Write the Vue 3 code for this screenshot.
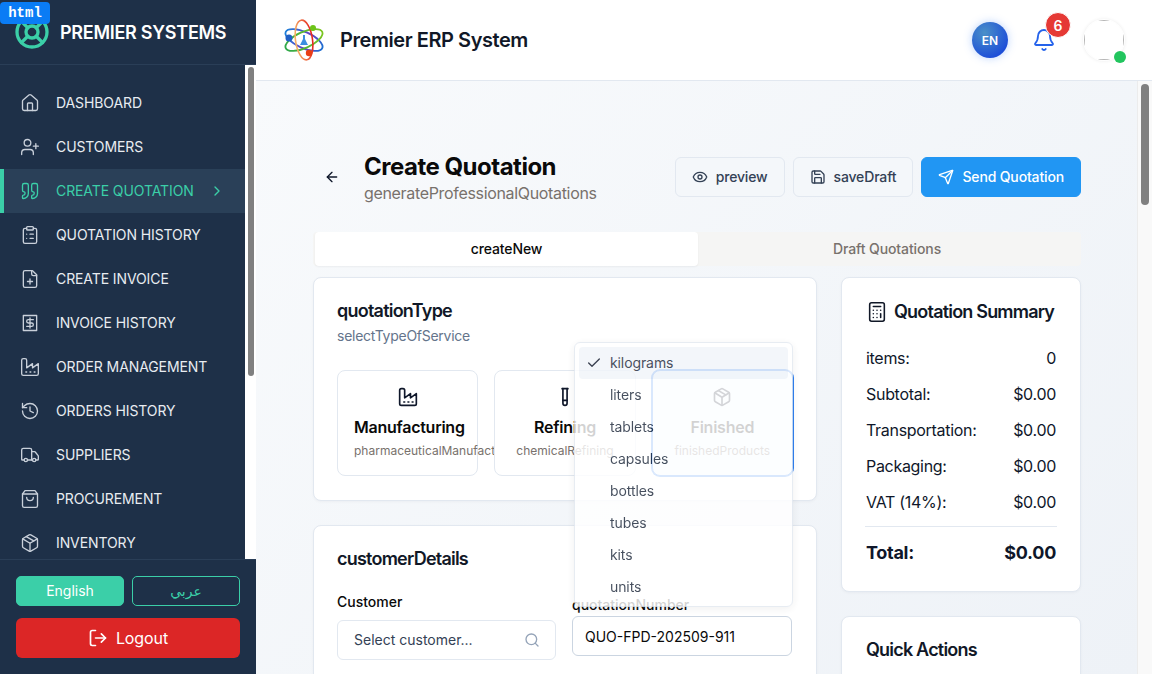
<script setup>
import { h } from 'vue'

const circle = (cx, cy, r) => `M${cx - r} ${cy}a${r} ${r} 0 1 0 ${r * 2} 0a${r} ${r} 0 1 0 ${-r * 2} 0`

const icons = {
  house: ['M15 21v-8a1 1 0 0 0-1-1h-4a1 1 0 0 0-1 1v8', 'M3 10a2 2 0 0 1 .709-1.528l7-5.999a2 2 0 0 1 2.582 0l7 5.999A2 2 0 0 1 21 10v9a2 2 0 0 1-2 2H5a2 2 0 0 1-2-2z'],
  userPlus: ['M16 21v-2a4 4 0 0 0-4-4H6a4 4 0 0 0-4 4v2', circle(9, 7, 4), 'M19 8v6', 'M22 11h-6'],
  quote: ['M16 3a2 2 0 0 0-2 2v6a2 2 0 0 0 2 2 1 1 0 0 1 1 1v1a2 2 0 0 1-2 2 1 1 0 0 0-1 1v2a1 1 0 0 0 1 1 6 6 0 0 0 6-6V5a2 2 0 0 0-2-2z', 'M5 3a2 2 0 0 0-2 2v6a2 2 0 0 0 2 2 1 1 0 0 1 1 1v1a2 2 0 0 1-2 2 1 1 0 0 0-1 1v2a1 1 0 0 0 1 1 6 6 0 0 0 6-6V5a2 2 0 0 0-2-2z'],
  clipboard: ['M9 2h6a1 1 0 0 1 1 1v2a1 1 0 0 1-1 1H9a1 1 0 0 1-1-1V3a1 1 0 0 1 1-1z', 'M16 4h2a2 2 0 0 1 2 2v14a2 2 0 0 1-2 2H6a2 2 0 0 1-2-2V6a2 2 0 0 1 2-2h2', 'M12 11h4', 'M12 16h4', 'M8 11h.01', 'M8 16h.01'],
  filePlus: ['M15 2H6a2 2 0 0 0-2 2v16a2 2 0 0 0 2 2h12a2 2 0 0 0 2-2V7Z', 'M14 2v4a2 2 0 0 0 2 2h4', 'M9 15h6', 'M12 18v-6'],
  receipt: ['M4 3h16v18H4z', 'M16 8h-6a2 2 0 1 0 0 4h4a2 2 0 1 1 0 4H8', 'M12 18V6'],
  factory: ['M2 20a2 2 0 0 0 2 2h16a2 2 0 0 0 2-2V8l-7 5V8l-7 5V4a2 2 0 0 0-2-2H4a2 2 0 0 0-2 2Z', 'M17 18h1', 'M12 18h1', 'M7 18h1'],
  history: ['M3 12a9 9 0 1 0 9-9 9.75 9.75 0 0 0-6.74 2.74L3 8', 'M3 3v5h5', 'M12 7v5l4 2'],
  truck: ['M14 18V6a2 2 0 0 0-2-2H4a2 2 0 0 0-2 2v11a1 1 0 0 0 1 1h2', 'M15 18H9', 'M19 18h2a1 1 0 0 0 1-1v-3.65a1 1 0 0 0-.22-.624l-3.48-4.35A1 1 0 0 0 17.52 8H14', circle(17, 18, 2), circle(7, 18, 2)],
  bag: ['M6 2 3 6v14a2 2 0 0 0 2 2h14a2 2 0 0 0 2-2V6l-3-4Z', 'M3 6h18', 'M16 10a4 4 0 0 1-8 0'],
  box: ['M11 21.73a2 2 0 0 0 2 0l7-4A2 2 0 0 0 21 16V8a2 2 0 0 0-1-1.73l-7-4a2 2 0 0 0-2 0l-7 4A2 2 0 0 0 3 8v8a2 2 0 0 0 1 1.73z', 'M12 22V12', 'm3.3 7 7.703 4.734a2 2 0 0 0 1.994 0L20.7 7', 'm7.5 4.27 9 5.15'],
  chevron: ['m9 18 6-6-6-6'],
  logout: ['M9 21H5a2 2 0 0 1-2-2V5a2 2 0 0 1 2-2h4', 'm16 17 5-5-5-5', 'M21 12H9'],
  arrowLeft: ['m12 19-7-7 7-7', 'M19 12H5'],
  eye: ['M2.062 12.348a1 1 0 0 1 0-.696 10.75 10.75 0 0 1 19.876 0 1 1 0 0 1 0 .696 10.75 10.75 0 0 1-19.876 0', circle(12, 12, 3)],
  save: ['M15.2 3a2 2 0 0 1 1.4.6l3.8 3.8a2 2 0 0 1 .6 1.4V19a2 2 0 0 1-2 2H5a2 2 0 0 1-2-2V5a2 2 0 0 1 2-2z', 'M17 21v-7a1 1 0 0 0-1-1H8a1 1 0 0 0-1 1v7', 'M7 3v4a1 1 0 0 0 1 1h7'],
  send: ['M14.536 21.686a.5.5 0 0 0 .937-.024l6.5-19a.496.496 0 0 0-.635-.635l-19 6.5a.5.5 0 0 0-.024.937l7.93 3.18a2 2 0 0 1 1.112 1.11z', 'm21.854 2.147-10.94 10.939'],
  bell: ['M10.268 21a2 2 0 0 0 3.464 0', 'M3.262 15.326A1 1 0 0 0 4 17h16a1 1 0 0 0 .74-1.673C19.41 13.956 18 12.499 18 8A6 6 0 0 0 6 8c0 4.499-1.411 5.956-2.738 7.326'],
  tube: ['M14.5 2v17.5c0 1.4-1.1 2.5-2.5 2.5c-1.4 0-2.5-1.1-2.5-2.5V2', 'M8.5 2h7', 'M14.5 16h-5'],
  calculator: ['M6 2h12a2 2 0 0 1 2 2v16a2 2 0 0 1-2 2H6a2 2 0 0 1-2-2V4a2 2 0 0 1 2-2z', 'M8 6h8', 'M16 14v4', 'M16 10h.01', 'M12 10h.01', 'M8 10h.01', 'M12 14h.01', 'M8 14h.01', 'M12 18h.01', 'M8 18h.01'],
  check: ['M20 6 9 17l-5-5'],
  search: [circle(11, 11, 8), 'm21 21-4.3-4.3'],
  buoy: [circle(12, 12, 10), circle(12, 12, 4), 'm4.93 4.93 4.24 4.24', 'm14.83 9.17 4.24-4.24', 'm14.83 14.83 4.24 4.24', 'm9.17 14.83-4.24 4.24']
}

const Icon = (props) => h('svg', {
  width: props.size || 20,
  height: props.size || 20,
  viewBox: '0 0 24 24',
  fill: 'none',
  stroke: 'currentColor',
  'stroke-width': props.weight || 2,
  'stroke-linecap': 'round',
  'stroke-linejoin': 'round'
}, icons[props.name].map((d) => h('path', { d })))
Icon.props = ['name', 'size', 'weight']

const navItems = [
  { label: 'Dashboard', icon: 'house' },
  { label: 'Customers', icon: 'userPlus' },
  { label: 'Create Quotation', icon: 'quote', active: true },
  { label: 'Quotation History', icon: 'clipboard' },
  { label: 'Create Invoice', icon: 'filePlus' },
  { label: 'Invoice History', icon: 'receipt' },
  { label: 'Order Management', icon: 'factory' },
  { label: 'Orders History', icon: 'history' },
  { label: 'Suppliers', icon: 'truck' },
  { label: 'Procurement', icon: 'bag' },
  { label: 'Inventory', icon: 'box' }
]

const serviceTypes = [
  { title: 'Manufacturing', sub: 'pharmaceuticalManufacturing', icon: 'factory' },
  { title: 'Refining', sub: 'chemicalRefining', icon: 'tube' },
  { title: 'Finished', sub: 'finishedProducts', icon: 'box', selected: true }
]

const units = ['kilograms', 'liters', 'tablets', 'capsules', 'bottles', 'tubes', 'kits', 'units']

const summary = [
  { label: 'items:', value: '0' },
  { label: 'Subtotal:', value: '$0.00' },
  { label: 'Transportation:', value: '$0.00' },
  { label: 'Packaging:', value: '$0.00' },
  { label: 'VAT (14%):', value: '$0.00' }
]
</script>

<template>
  <div class="app">
    <span class="html-tag">html</span>

    <aside class="sidebar">
      <div class="brand">
        <Icon name="buoy" :size="36" :weight="2.2" class="brand-icon" />
        <span>PREMIER SYSTEMS</span>
      </div>

      <div class="nav-wrap">
        <nav class="nav">
          <a v-for="item in navItems" :key="item.label" class="nav-item" :class="{ active: item.active }">
            <Icon :name="item.icon" :size="20" :weight="1.6" class="nav-icon" />
            <span>{{ item.label }}</span>
            <Icon v-if="item.active" name="chevron" :size="16" class="nav-chevron" />
          </a>
        </nav>
        <div class="rail"><div class="rail-thumb"></div></div>
      </div>

      <div class="side-foot">
        <div class="lang-row">
          <button class="lang lang-on">English</button>
          <button class="lang">عربي</button>
        </div>
        <button class="logout">
          <Icon name="logout" :size="20" />
          Logout
        </button>
      </div>
    </aside>

    <div class="main">
      <header class="topbar">
        <svg class="atom" width="42" height="42" viewBox="0 0 42 42" fill="none">
          <defs>
            <linearGradient id="ringRed" x1="0" y1="0" x2="1" y2="0">
              <stop offset="0" stop-color="#f7b267" />
              <stop offset="1" stop-color="#e5261f" />
            </linearGradient>
            <linearGradient id="ringBlue" x1="0" y1="0" x2="1" y2="0">
              <stop offset="0" stop-color="#1d7ed8" />
              <stop offset=".6" stop-color="#6a3fc4" />
              <stop offset="1" stop-color="#1d6fd1" />
            </linearGradient>
            <linearGradient id="ringGreen" x1="0" y1="0" x2="1" y2="0">
              <stop offset="0" stop-color="#2fa84a" />
              <stop offset="1" stop-color="#7cc520" />
            </linearGradient>
          </defs>
          <ellipse cx="21" cy="21" rx="20" ry="8" transform="rotate(24 21 21)" stroke="url(#ringBlue)" stroke-width="1.8" />
          <ellipse cx="21" cy="21" rx="20" ry="8" transform="rotate(-24 21 21)" stroke="url(#ringGreen)" stroke-width="1.8" />
          <ellipse cx="21" cy="21" rx="8.500" ry="20" transform="rotate(-8 21 21)" stroke="url(#ringRed)" stroke-width="1.600" />
          <path d="M20 16h2v4l3 6h-8l3-6z" fill="#3b8ee0" />
          <circle cx="6" cy="19" r="3.500" fill="#1f5fc4" />
          <circle cx="30" cy="9" r="3" fill="#6cc419" />
          <circle cx="26" cy="34" r="3.200" fill="#ea3d14" />
        </svg>
        <h1 class="app-title">Premier ERP System</h1>
        <div class="top-actions">
          <div class="globe">EN</div>
          <div class="bell">
            <Icon name="bell" :size="24" :weight="1.8" />
            <span class="bell-count">6</span>
          </div>
          <div class="avatar">
            <div class="avatar-clip"><div class="avatar-img"></div></div>
            <span class="avatar-dot"></span>
          </div>
        </div>
      </header>

      <div class="body">
        <main class="content">
          <div class="page">
            <div class="page-head">
              <button class="back"><Icon name="arrowLeft" :size="16" /></button>
              <div class="page-title">
                <h2>Create Quotation</h2>
                <p>generateProfessionalQuotations</p>
              </div>
              <div class="page-actions">
                <button class="btn"><Icon name="eye" :size="16" />preview</button>
                <button class="btn"><Icon name="save" :size="16" />saveDraft</button>
                <button class="btn btn-primary"><Icon name="send" :size="16" />Send Quotation</button>
              </div>
            </div>

            <div class="tabs">
              <div class="tab tab-on">createNew</div>
              <div class="tab tab-off">Draft Quotations</div>
            </div>

            <div class="columns">
              <div class="col">
                <section class="card card-type">
                  <h3>quotationType</h3>
                  <p class="card-sub">selectTypeOfService</p>
                  <div class="types">
                    <div v-for="t in serviceTypes" :key="t.title" class="type" :class="{ selected: t.selected }">
                      <Icon :name="t.icon" :size="20" :weight="2" class="type-icon" />
                      <div class="type-title">{{ t.title }}</div>
                      <div class="type-sub">{{ t.sub }}</div>
                    </div>
                  </div>
                </section>

                <section class="card">
                  <h3>customerDetails</h3>
                  <div class="fields">
                    <div>
                      <label class="lbl">Customer</label>
                      <div class="input input-search">
                        <span>Select customer...</span>
                        <Icon name="search" :size="16" class="search-icon" />
                      </div>
                    </div>
                    <div class="field-number">
                      <label class="lbl">quotationNumber</label>
                      <div class="input input-number">QUO-FPD-202509-911</div>
                    </div>
                  </div>
                </section>
              </div>

              <div class="col">
                <section class="card card-summary">
                  <h3 class="summary-title"><Icon name="calculator" :size="22" :weight="1.7" />Quotation Summary</h3>
                  <div v-for="row in summary" :key="row.label" class="sum-row">
                    <span>{{ row.label }}</span><span>{{ row.value }}</span>
                  </div>
                  <div class="sum-total">
                    <span>Total:</span><span>$0.00</span>
                  </div>
                </section>

                <section class="card card-quick">
                  <h3>Quick Actions</h3>
                </section>
              </div>
            </div>
          </div>

          <ul class="dropdown">
            <li v-for="(u, i) in units" :key="u" class="dd-item" :class="{ current: i === 0 }">
              <Icon v-if="i === 0" name="check" :size="16" class="dd-check" />
              {{ u }}
            </li>
          </ul>
        </main>
        <div class="rail rail-main"><div class="rail-thumb"></div></div>
      </div>
    </div>
  </div>
</template>

<style>
html, body { margin: 0; height: 100%; overflow: hidden; }
</style>

<style scoped>
* { box-sizing: border-box; }

.app {
  display: flex;
  height: 674px;
  overflow: hidden;
  position: relative;
  font-family: Inter, "DejaVu Sans", sans-serif;
  color: #0f172a;
}

.html-tag {
  position: absolute;
  left: 0;
  top: 2px;
  z-index: 5;
  width: 50px;
  height: 22px;
  background: #0a7cf5;
  border-radius: 4px;
  color: #fff;
  font: bold 14px/22px "Liberation Mono", monospace;
  text-align: center;
}

/* sidebar */
.sidebar {
  width: 256px;
  flex: none;
  display: flex;
  flex-direction: column;
  background: #1e3048;
  color: #e5e9ef;
}
.brand {
  height: 65px;
  flex: none;
  display: flex;
  align-items: center;
  gap: 10px;
  padding-left: 14px;
  border-bottom: 1px solid #2a3e57;
  color: #fff;
  font-size: 18px;
  font-weight: 600;
  letter-spacing: -.27px;
}
.brand-icon { color: #3bcfa8; }

.nav-wrap { flex: 1; min-height: 0; display: flex; }
.nav { flex: 1; min-width: 0; padding-top: 16px; overflow: hidden; }
.nav-item {
  height: 44px;
  display: flex;
  align-items: center;
  gap: 16px;
  padding-left: 20px;
  padding-bottom: 1px;
  font-size: 14px;
  font-weight: 400;
  letter-spacing: -.1px;
  text-transform: uppercase;
  color: #e8ecf1;
}
.nav-icon { color: #c9d0da; flex: none; margin-top: 1px; }
.nav-item.active {
  background: #2a4058;
  border-left: 4px solid #3bcfa8;
  padding-left: 16px;
  color: #3bcfa8;
}
.nav-item.active .nav-icon { color: #3bcfa8; }
.nav-chevron { margin-left: -1px; margin-top: 1px; }

.rail {
  width: 11px;
  flex: none;
  background: #fff;
  padding: 2px 2px 0 3px;
}
.rail-thumb {
  height: 309px;
  border-radius: 4px;
  background: #808080;
}
.rail-main {
  width: 15px;
  background: #f9f9f9;
  border-left: 1px solid #ececec;
  padding: 3px 3px 0 3px;
}
.rail-main .rail-thumb { height: 121px; }

.side-foot {
  height: 115px;
  flex: none;
  padding: 16px;
  border-top: 1px solid #2a3e57;
}
.lang-row { display: flex; gap: 8px; margin-bottom: 12px; }
.lang {
  flex: 1;
  height: 30px;
  padding: 0 0 1px;
  border: 1px solid #3bcfa8;
  border-radius: 5px;
  background: transparent;
  color: #3bcfa8;
  font: 14px Inter, "DejaVu Sans", sans-serif;
}
.lang-on { background: #3bcfa8; color: #fff; }
.logout {
  width: 100%;
  height: 40px;
  display: flex;
  align-items: center;
  justify-content: center;
  gap: 8px;
  border: 0;
  border-radius: 6px;
  background: #dc2626;
  color: #fff;
  font: 16px Inter, sans-serif;
  letter-spacing: -.1px;
}

/* top bar */
.main { flex: 1; min-width: 0; display: flex; flex-direction: column; }
.topbar {
  height: 81px;
  flex: none;
  display: flex;
  align-items: center;
  padding: 0 28px 0 27px;
  background: #fff;
  border-bottom: 1px solid #e2e8f0;
}
.atom { flex: none; }
.app-title { margin: 0 0 0 15px; font-size: 20px; font-weight: 600; letter-spacing: -.44px; color: #111827; }
.top-actions { margin-left: auto; display: flex; align-items: center; }
.globe {
  width: 36px;
  height: 36px;
  display: flex;
  align-items: center;
  justify-content: center;
  border-radius: 50%;
  background: radial-gradient(circle at 35% 30%, #4a90c8, #1d4ed8 75%);
  box-shadow: 0 0 8px rgba(59, 130, 246, .35);
  color: #fff;
  font-size: 12px;
  font-weight: 600;
}
.bell { position: relative; margin-left: 24px; width: 24px; height: 24px; color: #2563eb; }
.bell-count {
  position: absolute;
  left: 13px;
  top: -16px;
  width: 26px;
  height: 26px;
  display: flex;
  align-items: center;
  justify-content: center;
  border: 1px solid #fff;
  border-radius: 50%;
  background: #e53935;
  color: #fff;
  font-size: 14px;
  font-weight: 600;
}
.avatar {
  position: relative;
  margin-left: 28px;
  width: 40px;
  height: 40px;
  border-radius: 50%;
  box-shadow: 0 0 0 1px #fff, 0 0 4px rgba(0, 0, 0, .12);
}
.avatar-clip { width: 40px; height: 40px; border-radius: 50%; overflow: hidden; background: #fff; }
.avatar-img { width: 40px; height: 40px; border: 1px solid #b5b5b5; }
.avatar-dot {
  position: absolute;
  right: -2px;
  bottom: -3px;
  width: 12px;
  height: 12px;
  border-radius: 50%;
  background: #22c55e;
}

/* page */
.body { flex: 1; min-height: 0; display: flex; }
.content {
  flex: 1;
  min-width: 0;
  position: relative;
  overflow: hidden;
  padding-top: 76px;
  background: linear-gradient(135deg, #f8fafc, #eef2f7);
}
.page { width: 768px; margin-left: 57px; }
.page-head { display: flex; align-items: center; height: 40px; }
.back {
  width: 16px;
  height: 16px;
  padding: 0;
  margin-left: 11px;
  display: flex;
  border: 0;
  background: none;
  color: #0f172a;
}
.page-title { margin-left: 24px; white-space: nowrap; }
.page-title h2 { margin: 0; font-size: 24px; line-height: 32px; font-weight: 700; letter-spacing: -.5px; color: #0a0a0a; }
.page-title p { margin: 0; font-size: 16px; line-height: 20px; letter-spacing: -.33px; color: #78716c; }
.page-actions { margin-left: auto; display: flex; gap: 8px; }
.btn {
  height: 40px;
  display: flex;
  align-items: center;
  gap: 8px;
  padding: 0 16px 1px;
  border: 1px solid #e2e8f0;
  border-radius: 6px;
  background: #f4f7fa;
  color: #334155;
  font: 500 14px Inter, sans-serif;
  letter-spacing: -.15px;
}
.btn svg { margin-top: 1px; }
.btn-primary { border-color: #2196f3; background: #2196f3; color: #fff; }

.tabs {
  margin-top: 35px;
  height: 34px;
  display: flex;
  padding: 0 2px;
  border-radius: 4px;
  background: #f5f5f4;
}
.tab {
  flex: 1;
  display: flex;
  align-items: center;
  justify-content: center;
  padding-bottom: 1px;
  font-size: 14px;
  font-weight: 500;
  letter-spacing: -.1px;
  color: #78716c;
}
.tab-on { flex: 0 0 383px; background: #fff; border-radius: 4px; color: #0a0a0a; box-shadow: 0 1px 2px rgba(0, 0, 0, .05); }
.tab-off { padding-right: 3px; }

.columns { margin-top: 11px; display: grid; grid-template-columns: 504px 240px; gap: 24px; }
.col { display: flex; flex-direction: column; gap: 24px; min-width: 0; }
.card {
  padding: 23px;
  background: #fff;
  border: 1px solid #e2e8f0;
  border-radius: 8px;
  box-shadow: 0 1px 3px rgba(15, 23, 42, .04);
}
.card h3 { margin: 0; font-size: 18px; line-height: 20px; font-weight: 600; letter-spacing: -.77px; color: #111827; }
.card-type { padding-bottom: 24px; }
.card-sub { margin: 5px 0 0; font-size: 14px; line-height: 20px; letter-spacing: -.26px; color: #64748b; }

.types { margin-top: 24px; display: grid; grid-template-columns: repeat(3, minmax(0, 1fr)); gap: 16px; }
.type {
  position: relative;
  z-index: 0;
  height: 106px;
  padding: 16px;
  background: #fff;
  border: 1px solid #e2e8f0;
  border-radius: 8px;
  text-align: center;
  white-space: nowrap;
}
.type.selected { border-color: #2f80f0; box-shadow: 0 0 0 1px #2f80f0; background: #eff6ff; }
.type-icon { display: block; margin: 0 auto; }
.type-title { margin-top: 8px; font-size: 16px; line-height: 24px; font-weight: 600; letter-spacing: -.25px; color: #0a0a0a; }
.type-sub { margin-top: 4px; font-size: 12px; line-height: 16px; color: #78716c; }

.fields { margin-top: 23px; display: grid; grid-template-columns: 219px 220px; gap: 16px; }
.lbl { display: block; font-size: 14px; line-height: 20px; font-weight: 500; color: #0a0a0a; }
.input {
  height: 40px;
  display: flex;
  align-items: center;
  border: 1px solid #e2e8f0;
  border-radius: 6px;
  background: #fff;
  font-size: 14px;
}
.input-search { margin-top: 8px; justify-content: space-between; padding: 0 15px 1px 16px; color: #334155; }
.search-icon { color: #94a3b8; }
.field-number { padding-top: 3px; }
.input-number { margin-top: 1px; padding-left: 12px; border-color: #cbd5e1; color: #0a0a0a; }

.card-summary { padding-top: 23px; padding-bottom: 0; }
.card .summary-title { display: flex; align-items: center; gap: 6px; margin-bottom: 17px; padding-left: 1px; white-space: nowrap; letter-spacing: -.8px; }
.sum-row {
  height: 36px;
  display: flex;
  align-items: center;
  justify-content: space-between;
  padding: 0 1px;
  font-size: 16px;
  letter-spacing: -.3px;
  color: #0f172a;
}
.sum-total {
  margin-top: 6px;
  padding: 16px 1px 28px;
  display: flex;
  justify-content: space-between;
  border-top: 1px solid #e2e8f0;
  font-size: 18px;
  line-height: 20px;
  font-weight: 700;
  letter-spacing: -.3px;
}
.card-quick { padding-top: 23px; padding-left: 24px; height: 120px; }
.card-quick h3 { letter-spacing: -.8px; }

.dropdown {
  position: absolute;
  left: 318px;
  top: 261px;
  width: 219px;
  height: 265px;
  margin: 0;
  padding: 4px;
  list-style: none;
  background: #fff;
  border: 1px solid #e2e8f0;
  border-radius: 6px;
  box-shadow: 0 2px 10px rgba(0, 0, 0, .08);
  opacity: .82;
}
.dd-item {
  position: relative;
  height: 32px;
  display: flex;
  align-items: center;
  padding-left: 31px;
  padding-bottom: 1px;
  border-radius: 4px;
  font-size: 14px;
  letter-spacing: -.1px;
  color: #1e293b;
}
.dd-item.current { background: #f1f5f9; }
.dd-check { position: absolute; left: 7px; top: 8px; color: #0f172a; }
</style>
